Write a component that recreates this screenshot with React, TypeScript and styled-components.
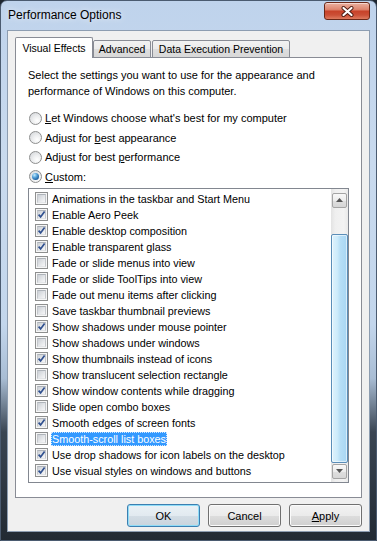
import React from 'react';
import styled, { createGlobalStyle } from 'styled-components';

const GlobalStyle = createGlobalStyle`
  html, body {
    margin: 0;
    padding: 0;
  }
  body {
    width: 377px;
    height: 541px;
    overflow: hidden;
    background: #1e2630;
    font-family: "Liberation Sans", Arial, sans-serif;
    font-size: 11px;
    color: #000;
  }
`;

const Frame = styled.div`
  box-sizing: border-box;
  width: 377px;
  height: 541px;
  display: flex;
  flex-direction: column;
  padding: 0 6px 8px 6px;
  border: 1px solid #4b5b70;
  border-radius: 7px 7px 0 0;
  background: linear-gradient(180deg, #bfd3ec 0%, #c9daee 30%, #c3d6ec 60%, #a9bdd4 70%, #3a4552 80%, #222a33 100%);
`;

const TitleBar = styled.div`
  height: 29px;
  display: flex;
  align-items: flex-start;
  padding-left: 1px;
`;

const Caption = styled.div`
  font-size: 12px;
  line-height: 16px;
  margin-top: 6px;
  text-shadow: 0 0 6px rgba(255, 255, 255, 0.9);
`;

const CloseButton = styled.div`
  box-sizing: border-box;
  margin-left: auto;
  margin-top: 1px;
  width: 46px;
  height: 18px;
  border: 1px solid #6a2818;
  border-radius: 3px;
  background: linear-gradient(180deg, #ebb0a0 0%, #de8670 40%, #c8432a 52%, #cb4f36 75%, #de7b5f 100%);
  box-shadow: inset 0 1px 0 rgba(255, 255, 255, 0.5);
  display: flex;
  align-items: center;
  justify-content: center;
`;

const Client = styled.div`
  flex: 1;
  display: flex;
  flex-direction: column;
  background: #f0f0f0;
  border: 1px solid #8d9db1;
  padding: 6px 7px 4px 7px;
`;

const TabStrip = styled.div`
  display: flex;
  align-items: flex-end;
  height: 21px;
  margin-bottom: -1px;
`;

const Tab = styled.div<{ $active?: boolean; $width: number; $gap?: number }>`
  position: relative;
  z-index: ${p => (p.$active ? 2 : 0)};
  box-sizing: border-box;
  width: ${p => p.$width}px;
  height: ${p => (p.$active ? 21 : 18)}px;
  margin-left: ${p => p.$gap ?? 0}px;
  padding-bottom: ${p => (p.$active ? 1 : 0)}px;
  border: 1px solid #898c95;
  border-bottom: ${p => (p.$active ? 'none' : '1px solid #898c95')};
  border-radius: 2px 2px 0 0;
  background: ${p => (p.$active ? '#fff' : 'linear-gradient(180deg, #f2f2f2 0%, #ebebeb 50%, #dedede 51%, #d8d8d8 100%)')};
  font-size: 10.5px;
  display: flex;
  align-items: center;
  justify-content: center;
  white-space: nowrap;
`;

const Panel = styled.div`
  position: relative;
  z-index: 1;
  box-sizing: border-box;
  height: 441px;
  background: #fff;
  border: 1px solid #898c95;
  padding: 9px 12px 0 12px;
  display: flex;
  flex-direction: column;
`;

const Intro = styled.p`
  margin: 0;
  line-height: 16px;
`;

const RadioGroup = styled.div`
  margin-top: 11px;
  display: flex;
  flex-direction: column;
  gap: 3.67px;
`;

const RadioRow = styled.div`
  height: 16px;
  display: flex;
  align-items: center;
  padding-left: 1px;
`;

const RadioCircle = styled.span<{ $on?: boolean }>`
  box-sizing: border-box;
  width: 13px;
  height: 13px;
  margin-right: 3px;
  border-radius: 50%;
  border: 1px solid #8e8f8f;
  background: radial-gradient(circle at 65% 70%, #ffffff 0%, #eeeff0 40%, #cfd2d6 100%);
  display: flex;
  align-items: center;
  justify-content: center;

  &::after {
    content: '';
    display: ${p => (p.$on ? 'block' : 'none')};
    width: 7px;
    height: 7px;
    border-radius: 50%;
    background: radial-gradient(circle at 35% 30%, #c6ecff 0%, #5aa6dc 35%, #1a5c9c 75%, #0d3f75 100%);
  }
`;

const Key = styled.span`
  text-decoration: underline;
`;

const ListBox = styled.div`
  box-sizing: border-box;
  height: 295px;
  margin-top: 3px;
  border: 1px solid #828790;
  background: #fff;
  display: flex;
`;

const Items = styled.div`
  flex: 1;
  padding: 2px 0 0 6px;
  font-size: 10.8px;
`;

const Item = styled.div`
  height: 16px;
  display: flex;
  align-items: center;
`;

const CheckBox = styled.span`
  box-sizing: border-box;
  width: 13px;
  height: 13px;
  margin-right: 3px;
  padding: 1px;
  border: 1px solid #8e8f8f;
  background: #f6f6f6;
  display: flex;
`;

const CheckInner = styled.span`
  flex: 1;
  border: 1px solid;
  border-color: #aeb3b9 #c4c7cb #e3e5e7 #c4c7cb;
  background: linear-gradient(135deg, #cbcfd5 0%, #e4e6e9 55%, #f7f7f8 100%);
  display: flex;
  align-items: center;
  justify-content: center;
  overflow: visible;
`;

const Label = styled.span<{ $selected?: boolean }>`
  line-height: 14px;
  padding: 0 1px;
  white-space: nowrap;
  color: ${p => (p.$selected ? '#fff' : '#000')};
  background: ${p => (p.$selected ? '#3399ff' : 'transparent')};
  outline: ${p => (p.$selected ? '1px dotted #cfe6ff' : 'none')};
  outline-offset: -1px;
`;

const ScrollBar = styled.div`
  width: 17px;
  display: flex;
  flex-direction: column;
  background: linear-gradient(90deg, #e3e3e3 0%, #efefef 25%, #f3f3f3 75%, #e9e9e9 100%);
`;

const ArrowButton = styled.div<{ $down?: boolean }>`
  box-sizing: border-box;
  height: 15px;
  margin: ${p => (p.$down ? '0 1px 3px 1px' : '4px 1px 0 1px')};
  border: 1px solid #a4a4a4;
  border-radius: 2px;
  background: linear-gradient(180deg, #f8f8f8 0%, #ececec 50%, #dfdfdf 51%, #d6d6d6 100%);
  display: flex;
  align-items: center;
  justify-content: center;
`;

const Track = styled.div`
  flex: 1;
  display: flex;
  flex-direction: column;
`;

const Thumb = styled.div`
  box-sizing: border-box;
  border: 1px solid #5a8db8;
  border-radius: 2px;
  background: linear-gradient(90deg, #def2fc 0%, #cdebfb 35%, #b6def6 55%, #a8d6f3 100%);
  box-shadow: inset 0 0 0 1px rgba(255, 255, 255, 0.55);
`;

const ButtonRow = styled.div`
  display: flex;
  justify-content: flex-end;
  gap: 8px;
  margin-top: 6px;
`;

const Button = styled.button<{ $default?: boolean }>`
  box-sizing: border-box;
  width: 73px;
  height: 23px;
  padding: 0;
  font-family: inherit;
  font-size: 11px;
  color: #000;
  border: 1px solid ${p => (p.$default ? '#3c7fb1' : '#707070')};
  border-radius: 3px;
  background: ${p =>
    p.$default
      ? 'linear-gradient(180deg, #eaf1f6 0%, #e2eaf0 50%, #d3dde5 51%, #c9d4dd 100%)'
      : 'linear-gradient(180deg, #f2f2f2 0%, #ebebeb 50%, #dddddd 51%, #cfcfcf 100%)'};
  box-shadow: inset 0 0 0 1px ${p => (p.$default ? '#8fdcf7' : '#fbfbfb')};
`;

const effects: [string, boolean][] = [
  ['Animations in the taskbar and Start Menu', false],
  ['Enable Aero Peek', true],
  ['Enable desktop composition', true],
  ['Enable transparent glass', true],
  ['Fade or slide menus into view', false],
  ['Fade or slide ToolTips into view', false],
  ['Fade out menu items after clicking', false],
  ['Save taskbar thumbnail previews', false],
  ['Show shadows under mouse pointer', true],
  ['Show shadows under windows', false],
  ['Show thumbnails instead of icons', true],
  ['Show translucent selection rectangle', false],
  ['Show window contents while dragging', true],
  ['Slide open combo boxes', false],
  ['Smooth edges of screen fonts', true],
  ['Smooth-scroll list boxes', false],
  ['Use drop shadows for icon labels on the desktop', true],
  ['Use visual styles on windows and buttons', true],
];

const selectedIndex = 15;
const trackHeight = 256;
const thumbTop = 26;
const thumbHeight = 229;

function CloseGlyph() {
  return (
    <svg width="13" height="11" viewBox="0 0 13 11">
      <path d="M2.5 2 L10.5 9 M10.5 2 L2.5 9" stroke="#4a1a10" strokeWidth="4" strokeLinecap="round" />
      <path d="M2.5 2 L10.5 9 M10.5 2 L2.5 9" stroke="#ffffff" strokeWidth="2.2" strokeLinecap="round" />
    </svg>
  );
}

function CheckMark() {
  return (
    <svg width="9" height="9" viewBox="0 0 9 9" style={{ margin: -1 }}>
      <path d="M1.6 4.6 L3.6 6.9 L7.6 1.6" fill="none" stroke="#30508f" strokeWidth="1.7" />
    </svg>
  );
}

function Arrow({ down }: { down?: boolean }) {
  return (
    <svg width="7" height="4" viewBox="0 0 7 4">
      <path d={down ? 'M0 0 H7 L3.5 4 Z' : 'M0 4 H7 L3.5 0 Z'} fill="#555" />
    </svg>
  );
}

export default function App() {
  return (
    <>
      <GlobalStyle />
      <Frame>
        <TitleBar>
          <Caption>Performance Options</Caption>
          <CloseButton>
            <CloseGlyph />
          </CloseButton>
        </TitleBar>
        <Client>
          <TabStrip>
            <Tab $active $width={78}>Visual Effects</Tab>
            <Tab $width={58}>Advanced</Tab>
            <Tab $width={138} $gap={1}>Data Execution Prevention</Tab>
          </TabStrip>
          <Panel>
            <Intro>
              Select the settings you want to use for the appearance and
              <br />
              performance of Windows on this computer.
            </Intro>
            <RadioGroup>
              <RadioRow>
                <RadioCircle />
                <span><Key>L</Key>et Windows choose what&apos;s best for my computer</span>
              </RadioRow>
              <RadioRow>
                <RadioCircle />
                <span>Adjust for <Key>b</Key>est appearance</span>
              </RadioRow>
              <RadioRow>
                <RadioCircle />
                <span>Adjust for best <Key>p</Key>erformance</span>
              </RadioRow>
              <RadioRow>
                <RadioCircle $on />
                <span><Key>C</Key>ustom:</span>
              </RadioRow>
            </RadioGroup>
            <ListBox>
              <Items>
                {effects.map(([label, checked], i) => (
                  <Item key={label}>
                    <CheckBox>
                      <CheckInner>{checked && <CheckMark />}</CheckInner>
                    </CheckBox>
                    <Label $selected={i === selectedIndex}>{label}</Label>
                  </Item>
                ))}
              </Items>
              <ScrollBar>
                <ArrowButton>
                  <Arrow />
                </ArrowButton>
                <Track style={{ height: trackHeight }}>
                  <Thumb style={{ marginTop: thumbTop, height: thumbHeight }} />
                </Track>
                <ArrowButton $down>
                  <Arrow down />
                </ArrowButton>
              </ScrollBar>
            </ListBox>
          </Panel>
          <ButtonRow>
            <Button $default>OK</Button>
            <Button>Cancel</Button>
            <Button><Key>A</Key>pply</Button>
          </ButtonRow>
        </Client>
      </Frame>
    </>
  );
}
